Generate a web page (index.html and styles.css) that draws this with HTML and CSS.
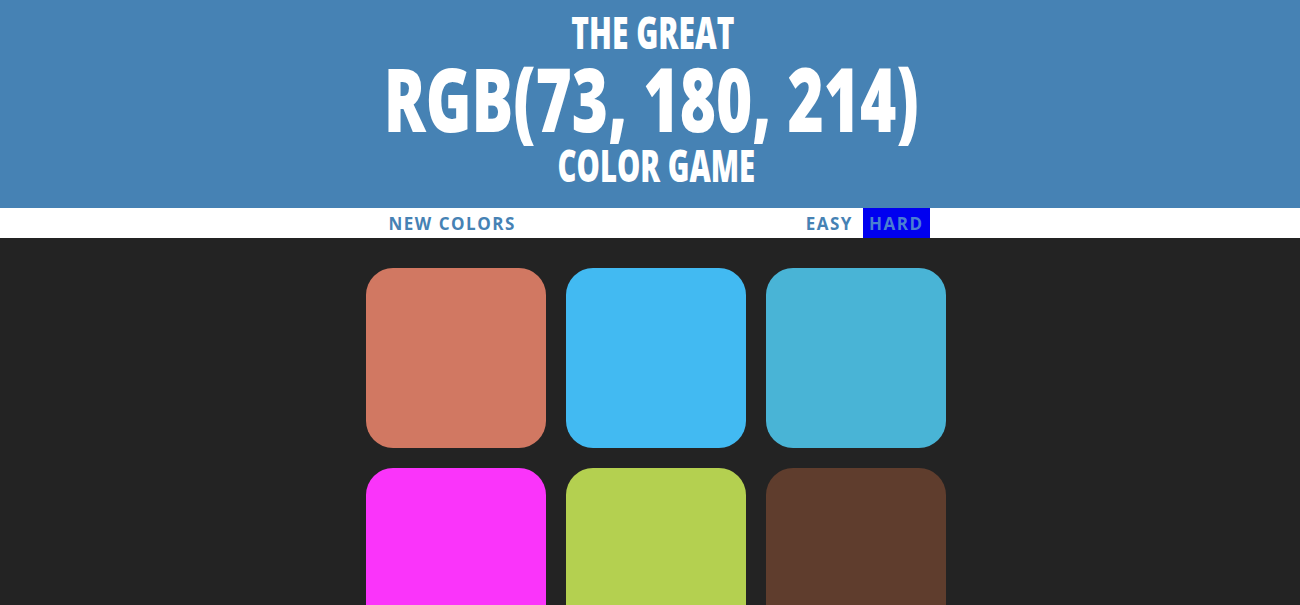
FILE: index.html
```html
<!DOCTYPE html>
<html lang="en">
<head>
<meta charset="utf-8">
<title>Color Game</title>
<link rel="stylesheet" href="styles.css">
</head>
<body>
  <h1 class="title">
    <span class="title-line title-small"><span class="squeeze sq-top">The Great</span></span>
    <span class="title-line title-big"><span class="squeeze sq-mid">RGB(73, 180, 214)</span></span>
    <span class="title-line title-small title-last"><span class="squeeze sq-bot">Color Game</span></span>
  </h1>
  <div class="stripe">
    <div class="stripe-inner">
      <button class="btn">New Colors</button>
      <span class="message"></span>
      <button class="btn">Easy</button>
      <button class="btn selected">Hard</button>
    </div>
  </div>
  <div class="board">
    <div class="grid">
      <div class="square sq1"></div>
      <div class="square sq2"></div>
      <div class="square sq3"></div>
      <div class="square sq4"></div>
      <div class="square sq5"></div>
      <div class="square sq6"></div>
    </div>
  </div>
</body>
</html>
```
FILE: styles.css
```css
* { box-sizing: border-box; }
html, body { margin: 0; padding: 0; }
body {
  background: #232323;
  font-family: "Open Sans", "Liberation Sans", sans-serif;
  overflow: hidden;
}
.title {
  margin: 0;
  padding: 10px 0 21px;
  background: #4682b4;
  color: #fff;
  text-align: center;
  text-transform: uppercase;
  font-family: "Open Sans", "Liberation Sans", sans-serif;
  font-weight: 800;
}
.title-line { display: block; }
.title-small { font-size: 44px; line-height: 44px; }
.title-big { font-size: 89px; line-height: 88px; }
.title-last { margin-top: 1px; }
.squeeze { display: inline-block; }
.sq-top { transform: translateX(3px) scaleX(0.68); }
.sq-mid { transform: translateX(1px) scaleX(0.696); }
.sq-bot { transform: translateX(6px) scaleX(0.666); }
.stripe {
  background: #fff;
  height: 30px;
  padding-left: 12px;
}
.stripe-inner {
  display: flex;
  justify-content: center;
  align-items: stretch;
  height: 100%;
}
.btn {
  border: none;
  background: none;
  margin: 0;
  padding: 0 6px;
  font-family: "Open Sans", "Liberation Sans", sans-serif;
  font-weight: 700;
  font-size: 17px;
  letter-spacing: 1.5px;
  text-transform: uppercase;
  color: #4682b4;
  height: 100%;
}
.btn + .btn { margin-left: 4px; }
.message { width: 278px; }
.selected { background: #0000f0; color: #4a7fd0; }
.board { padding-left: 12px; }
.grid {
  width: 600px;
  margin: 20px auto 0;
  display: flex;
  flex-wrap: wrap;
}
.square {
  width: 180px;
  height: 180px;
  margin: 10px;
  border-radius: 27px;
}
.sq1 { background: rgb(209, 120, 98); }
.sq2 { background: rgb(66, 186, 242); }
.sq3 { background: rgb(73, 180, 214); }
.sq4 { background: rgb(250, 52, 250); }
.sq5 { background: rgb(180, 208, 80); }
.sq6 { background: rgb(95, 61, 45); }
```
